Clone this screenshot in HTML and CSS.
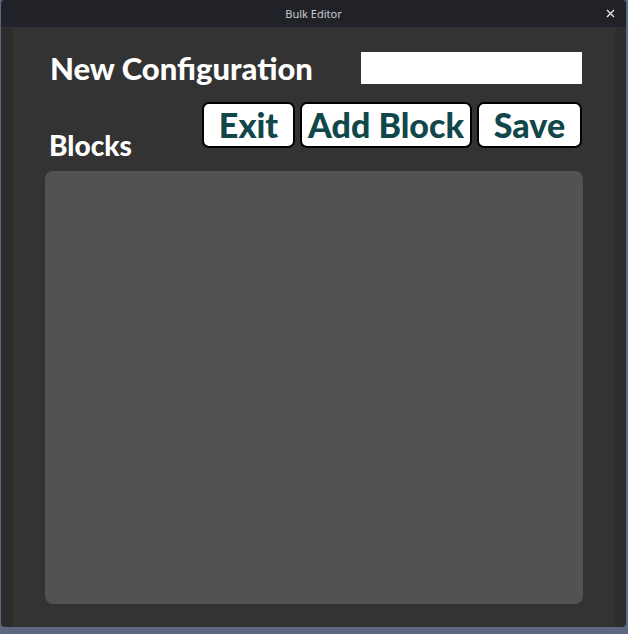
FILE: index.html
```html
<!DOCTYPE html>
<html>
<head>
<meta charset="utf-8">
<link rel="stylesheet" href="styles.css">
</head>
<body>
<div class="window">
  <div class="titlebar">
    <span class="title">Bulk Editor</span>
    <span class="close">
      <svg width="9" height="9" viewBox="0 0 9 9"><path d="M1 1L8 8M8 1L1 8" stroke="#e6e6e6" stroke-width="1.4"/></svg>
    </span>
  </div>
  <div class="frame">
    <div class="panel">
      <div class="row-head">
        <h1 class="heading">New Configuration</h1>
        <div class="name-input"></div>
      </div>
      <div class="row-blocks">
        <h2 class="subheading">Blocks</h2>
        <div class="buttons">
          <button class="btn btn-exit">Exit</button>
          <button class="btn btn-add">Add Block</button>
          <button class="btn btn-save">Save</button>
        </div>
      </div>
      <div class="blocks-box"></div>
    </div>
  </div>
</div>
</body>
</html>
```
FILE: styles.css
```css
html, body {
  margin: 0;
  padding: 0;
}
body {
  width: 628px;
  height: 634px;
  background: #5c6882;
  overflow: hidden;
  font-family: "Lato", "Liberation Sans", sans-serif;
}
.window {
  margin-left: 1px;
  width: 625px;
  height: 627px;
  background: #2d2d2d;
  border-radius: 4px 4px 4px 4px;
  overflow: hidden;
  display: flex;
  flex-direction: column;
}
.titlebar {
  height: 27px;
  flex: none;
  background: #202227;
  position: relative;
  display: flex;
  align-items: center;
  justify-content: center;
}
.title {
  font-family: "Noto Sans", "Liberation Sans", sans-serif;
  font-size: 11px;
  color: #c9ccd2;
  margin-top: -1px;
}
.close {
  position: absolute;
  right: 11px;
  top: 9px;
  width: 9px;
  height: 9px;
  display: flex;
}
.frame {
  flex: 1;
  display: flex;
  padding: 0 11px 0 12px;
}
.panel {
  flex: 1;
  background: #333333;
  padding: 25px 32px 23px 32px;
  display: flex;
  flex-direction: column;
}
.row-head {
  display: flex;
  align-items: center;
  justify-content: space-between;
  height: 32px;
}
.heading {
  margin: 0 0 0 5px;
  font-size: 31px;
  font-weight: 900;
  color: #ffffff;
  line-height: 32px;
}
.name-input {
  width: 221px;
  height: 32px;
  background: #ffffff;
  margin-right: 1px;
}
.row-blocks {
  display: flex;
  justify-content: space-between;
  align-items: flex-end;
  margin-top: 18px;
}
.subheading {
  margin: 0 0 0 4px;
  font-size: 28px;
  font-weight: 900;
  color: #ffffff;
  line-height: 30px;
  position: relative;
  top: 12px;
}
.buttons {
  display: flex;
  gap: 5px;
}
.btn {
  height: 46px;
  background: #ffffff;
  border: 2px solid #000000;
  border-radius: 7px;
  font-family: "Lato", "Liberation Sans", sans-serif;
  font-size: 34px;
  font-weight: 900;
  color: #11474b;
  padding: 0;
  line-height: 40px;
}
.btn-exit { width: 93px; }
.btn-add { width: 172px; }
.btn-save { width: 105px; margin-right: 1px; }
.blocks-box {
  margin-top: 23px;
  flex: 1;
  background: #525252;
  border-radius: 8px;
}
```
